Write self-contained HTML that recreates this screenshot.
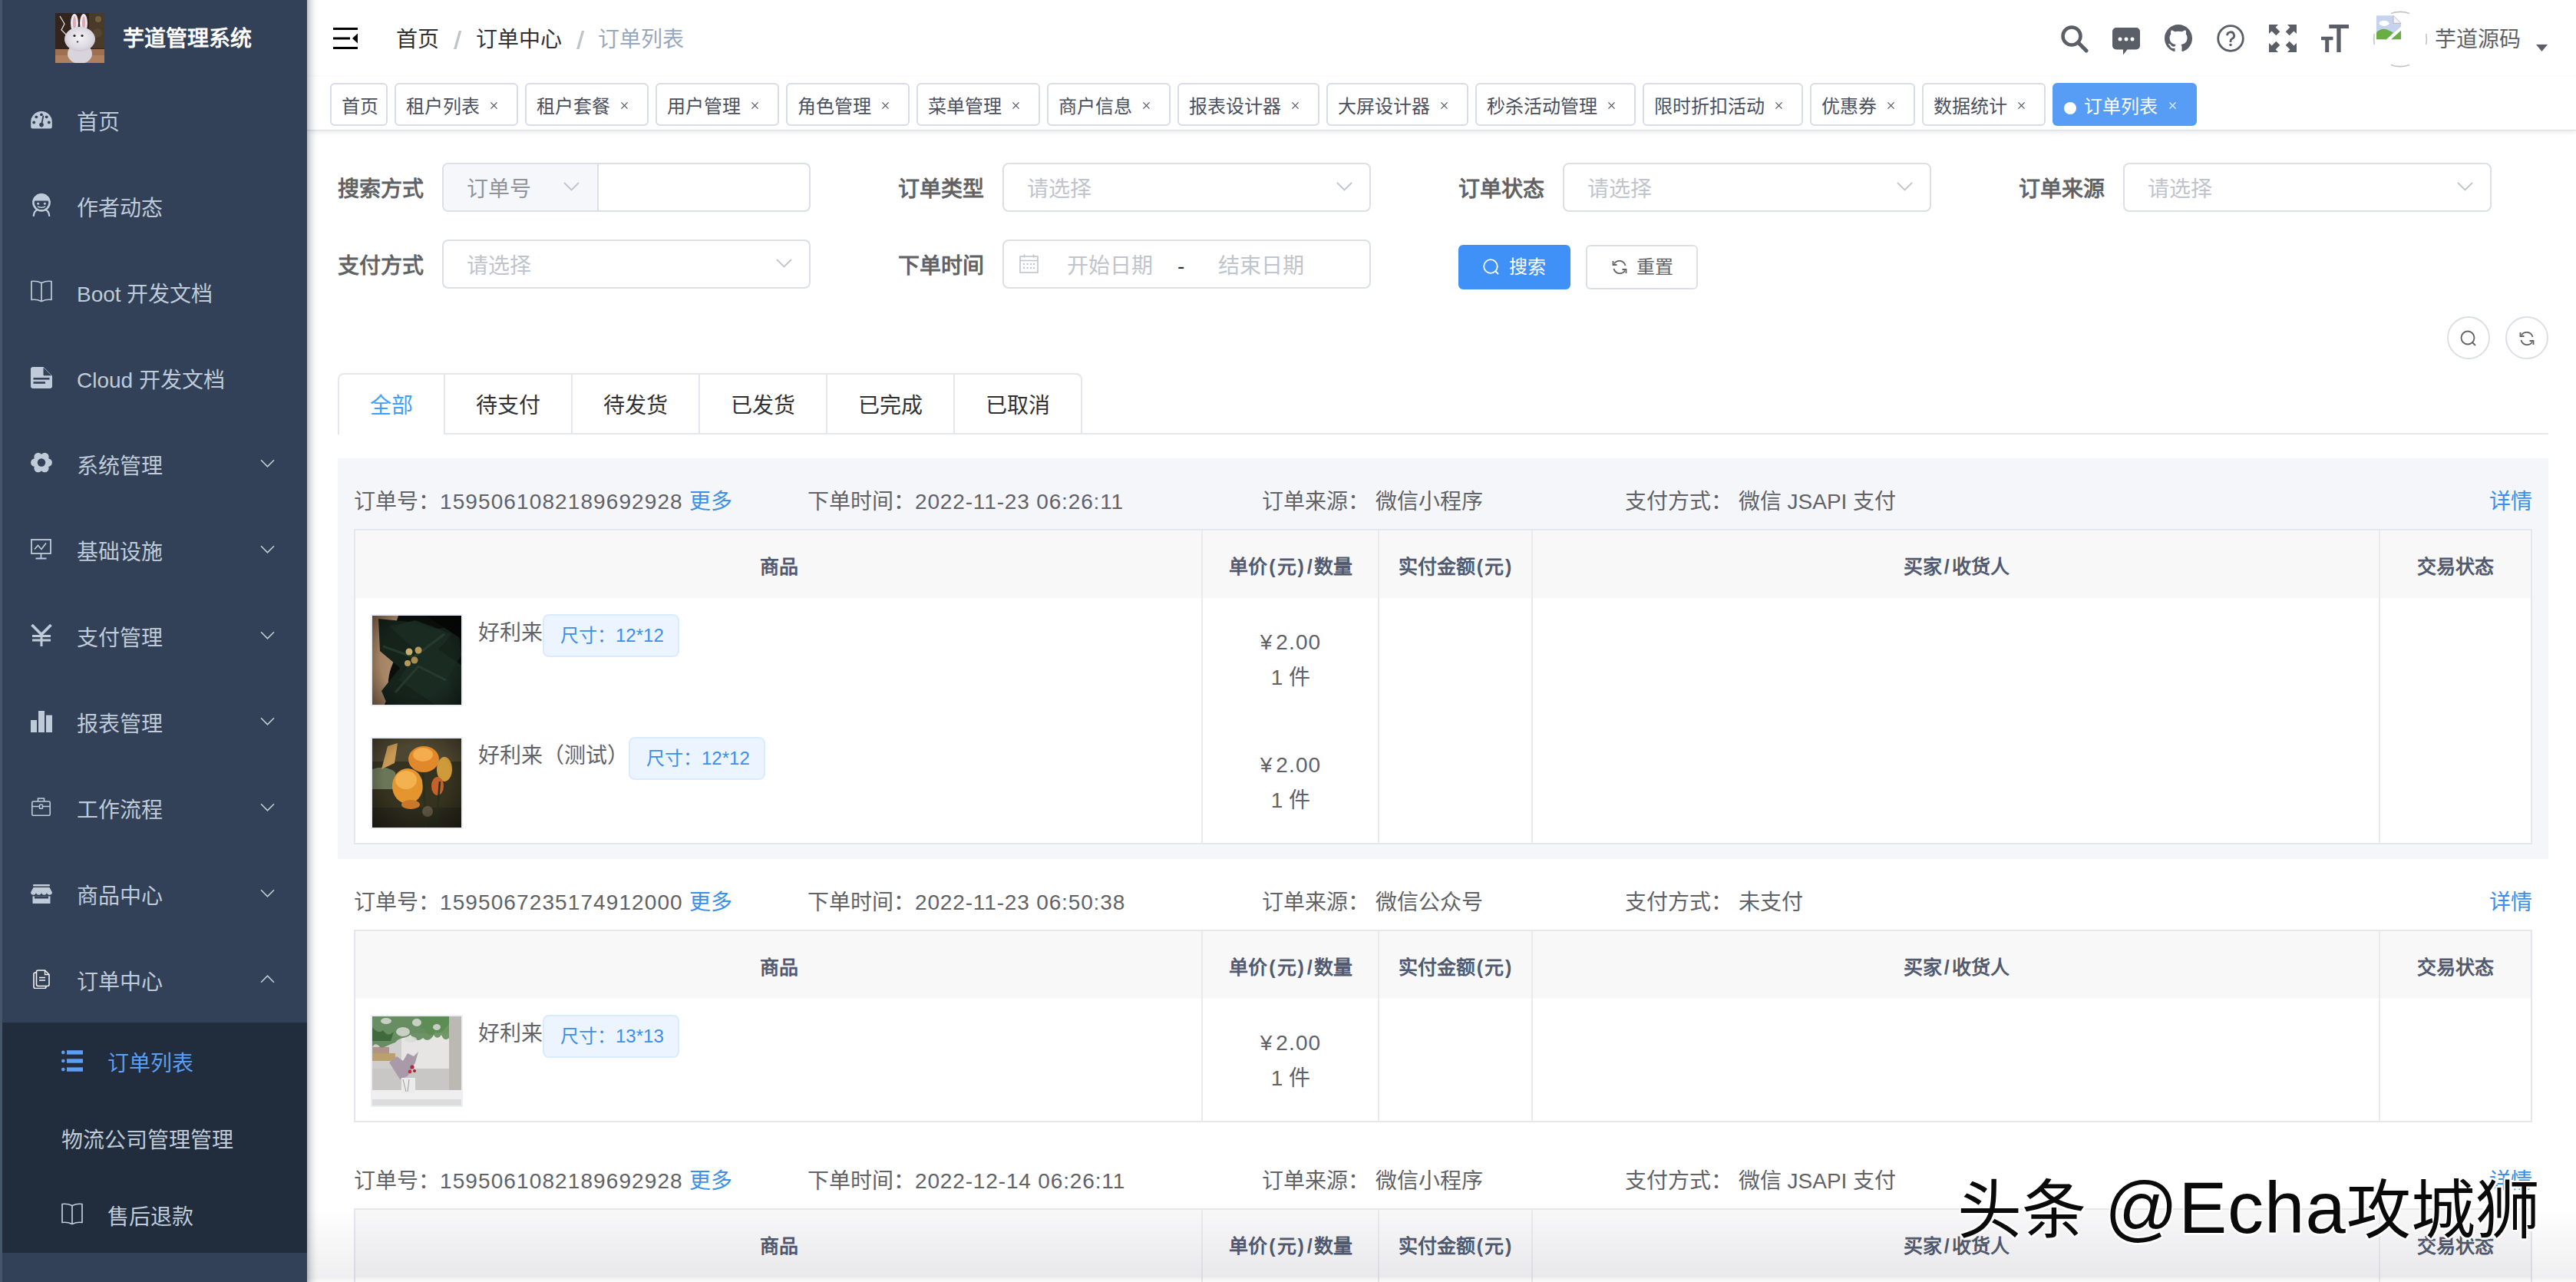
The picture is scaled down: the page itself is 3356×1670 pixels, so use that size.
<!DOCTYPE html>
<html lang="zh-CN"><head><meta charset="utf-8">
<style>
*{box-sizing:border-box;margin:0;padding:0}
html,body{width:3356px;height:1670px;overflow:hidden;background:#fff;font-family:"Liberation Sans",sans-serif;position:relative}
.abs{position:absolute}
/* sidebar */
#side{position:absolute;left:0;top:0;width:400px;height:1670px;background:#324157;z-index:3}
#side .edge{position:absolute;left:0;top:0;width:3px;height:1670px;background:#45566b;z-index:2}
#logo{position:absolute;left:72px;top:17px;width:64px;height:65px}
#title{position:absolute;left:160px;top:28px;font-size:28px;font-weight:bold;color:#fff;line-height:46px;white-space:nowrap}
.mi{position:absolute;left:0;width:400px;height:112px;color:#bfcbd9;font-size:28px}
.mi .ic{position:absolute;left:40px;top:42px;width:28px;height:28px}
.mi .tx{position:absolute;left:100px;top:0;line-height:116px;white-space:nowrap}
.mi .ar{position:absolute;left:339px;top:48px;width:19px;height:11px}
#sub{position:absolute;left:0;top:1332px;width:400px;height:300px;background:#212d3c}
.si{position:absolute;left:0;width:400px;height:100px;color:#bfcbd9;font-size:28px}
.si .ic{position:absolute;left:80px;top:36px;width:28px;height:28px}
.si .tx{position:absolute;left:140px;top:0;line-height:104px;white-space:nowrap}
#sideshadow{position:absolute;left:400px;top:0;width:14px;height:1670px;background:linear-gradient(90deg,rgba(0,21,41,.26),rgba(0,21,41,.10) 40%,rgba(0,21,41,.03) 75%,rgba(0,21,41,0));z-index:2}
/* navbar */
#nav{position:absolute;left:400px;top:0;width:2956px;height:100px;background:#fff}
.bc{position:absolute;top:0;line-height:104px;font-size:28px;color:#303133;white-space:nowrap}
.sep{position:absolute;top:0;line-height:100px;font-size:28px;color:#c0c4cc;font-weight:bold}
.hic{position:absolute;top:30px;width:40px;height:40px}
/* tags */
#tags{position:absolute;left:400px;top:100px;width:2956px;height:70px;background:#fff;border-bottom:1px solid #d8dce5;box-shadow:0 2px 6px rgba(0,21,41,.10)}
.tag{position:absolute;top:8px;height:56px;border:2px solid #d8dce5;border-radius:6px;color:#495060;font-size:24px;line-height:57px;padding-left:13px;white-space:nowrap;background:#fff}
.tag .x{position:absolute;right:25px;top:23px;width:9px;height:9px}
.tag.act{background:#589df5;border-color:#589df5;color:#fff}
.tag.act .dot{display:inline-block;width:16px;height:16px;border-radius:50%;background:#fff;margin-right:10px;vertical-align:-2px}
/* form */
.lbl{position:absolute;font-size:28px;font-weight:bold;color:#606266;line-height:69px;white-space:nowrap}
.inp{position:absolute;height:64px;border:2px solid #dcdfe6;border-radius:8px;background:#fff}
.ph{position:absolute;font-size:28px;color:#c0c4cc;line-height:65px;white-space:nowrap}
.chev{position:absolute;width:21px;height:12px}
.btn{position:absolute;height:58px;border-radius:6px;font-size:24px;line-height:54px;white-space:nowrap}
/* tabs */
#tabs{position:absolute;left:440px;top:486px;height:80px;border:2px solid #e4e7ed;border-bottom:none;border-radius:8px 8px 0 0;display:flex}
.tab{height:78px;line-height:82px;font-size:28px;color:#303133;padding:0 40px;border-left:2px solid #e4e7ed;white-space:nowrap}
.tab:first-child{border-left:none;color:#409eff}
#tabline{position:absolute;left:578px;top:564px;width:2742px;height:2px;background:#e4e7ed}
/* orders */
.ord{position:absolute;left:440px;width:2880px}
.oh{position:absolute;top:0;height:92px;font-size:28px;color:#606266;line-height:113px;white-space:nowrap}
.num{letter-spacing:1.1px}
.blue{color:#3b8fea}
.pp{margin:0 2px}
.num2{letter-spacing:.85px}
.tbl{position:absolute;left:21px;top:92px;width:2838px;border:2px solid #e4e7ed;background:#fff}
.th{position:absolute;top:0;height:88px;background:#f8f8f9;font-size:25px;font-weight:bold;color:#515a6e;line-height:94px;text-align:center}
.vl{position:absolute;top:0;width:2px;background:#e8eaec}
.pimg{position:absolute;width:120px;height:120px;border:2px solid #ebeef5}
.pn{position:absolute;font-size:28px;color:#606266;line-height:40px;white-space:nowrap}
.ptag{position:absolute;height:56px;border:2px solid #d9ecff;background:#ecf5ff;border-radius:8px;color:#3b8fea;font-size:24px;line-height:52px;padding:0 21px;white-space:nowrap}
.price{position:absolute;width:230px;text-align:center;font-size:28px;color:#606266;line-height:46px}
</style></head><body>

<div id="side">
  <div id="logo"><svg width="64" height="65" viewBox="0 0 64 65"><defs><radialGradient id="rh" cx="50%" cy="45%" r="60%"><stop offset="0" stop-color="#f4f2f6"/><stop offset=".7" stop-color="#dcd8e0"/><stop offset="1" stop-color="#c4bfc8"/></radialGradient></defs>
<rect width="64" height="65" fill="#33251d"/><rect x="44" y="0" width="20" height="46" fill="#4a3a2a"/><circle cx="56" cy="8" r="4" fill="#6f6140"/><circle cx="55" cy="26" r="6" fill="#554632"/><rect y="47" width="64" height="18" fill="#9c7050"/><rect y="55" width="64" height="10" fill="#ad8060"/>
<path d="M6 4l6 10-4 8 6 6" stroke="#e8e8e8" stroke-width="1.2" fill="none"/>
<ellipse cx="25" cy="13" rx="5" ry="12" fill="#ece8ee"/><ellipse cx="25" cy="13" rx="2" ry="9" fill="#d9a9b6"/><ellipse cx="37" cy="13" rx="5" ry="12" fill="#ece8ee"/><ellipse cx="37" cy="13" rx="2" ry="9" fill="#d9a9b6"/>
<ellipse cx="32" cy="53" rx="16" ry="13" fill="#d8d4dc"/><ellipse cx="32" cy="34" rx="20" ry="16" fill="url(#rh)"/><circle cx="25" cy="29.5" r="1.6" fill="#222"/><circle cx="35" cy="29.5" r="1.6" fill="#222"/><ellipse cx="29" cy="37.5" rx="1.3" ry="1.1" fill="#333"/></svg></div>
  <div id="title">芋道管理系统</div>
  <div class="mi" style="top:102px"><svg class="ic" style="top:43px;height:23px" viewBox="0 0 28 23"><path d="M2.5 22.6Q0.2 22.6 0.2 20.3V14A13.8 14 0 0 1 27.8 14V20.3Q27.8 22.6 25.5 22.6z" fill="#bfcbd9"/><circle cx="4.2" cy="14.5" r="1.9" fill="#324157"/><circle cx="7.3" cy="7.3" r="1.9" fill="#324157"/><circle cx="14.0" cy="4.3" r="1.9" fill="#324157"/><circle cx="20.7" cy="7.3" r="1.9" fill="#324157"/><circle cx="23.8" cy="14.5" r="1.9" fill="#324157"/><path d="M16.3 6.5L14.2 17" stroke="#324157" stroke-width="1.8" stroke-linecap="round"/><circle cx="14" cy="17.6" r="2.8" fill="#324157"/></svg><div class="tx">首页</div></div>
  <div class="mi" style="top:214px"><svg class="ic" style="top:38px;height:30px" viewBox="0 0 28 30"><circle cx="14" cy="11.8" r="10.6" fill="none" stroke="#bfcbd9" stroke-width="2.6"/><path d="M3.6 9.5A10.6 10.6 0 0 1 24.4 9.5z" fill="#bfcbd9"/><circle cx="9.6" cy="13.2" r="1.5" fill="#bfcbd9"/><circle cx="18.4" cy="13.2" r="1.5" fill="#bfcbd9"/><path d="M9.5 17.3q4.5 1.8 9 0" stroke="#bfcbd9" stroke-width="1.6" fill="none" stroke-linecap="round"/><path d="M8 21.5Q4.3 23.5 3.8 29M20 21.5Q23.7 23.5 24.2 29" stroke="#bfcbd9" stroke-width="2.3" fill="none" stroke-linecap="round"/></svg><div class="tx">作者动态</div></div>
  <div class="mi" style="top:326px"><svg class="ic" style="top:39px;height:29px" viewBox="0 0 28 29"><path d="M1 1.5Q7.5 0.5 14 3.5Q20.5 0.5 27 1.5V25.5Q20.5 24.5 14 27.5Q7.5 24.5 1 25.5z" fill="none" stroke="#bfcbd9" stroke-width="1.7" stroke-linejoin="round"/><path d="M14 3.5V27.5" stroke="#bfcbd9" stroke-width="1.7"/></svg><div class="tx">Boot 开发文档</div></div>
  <div class="mi" style="top:438px"><svg class="ic" style="top:40px;height:28px" viewBox="0 0 28 28"><path d="M3 0h13.5L28 11.5V25q0 3-3 3H3q-3 0-3-3V3q0-3 3-3z" fill="#bfcbd9"/><path d="M16.5 0.8V10.5q0 .8.8.8H27.2z" fill="#324157"/><rect x="3.5" y="14" width="21" height="2.6" fill="#324157"/><rect x="3.5" y="19.2" width="15.5" height="2.6" fill="#324157"/></svg><div class="tx">Cloud 开发文档</div></div>
  <div class="mi" style="top:550px"><svg class="ic" style="top:39px;height:27px" viewBox="0 0 28 27"><circle cx="14" cy="13.5" r="10.8" fill="#bfcbd9"/><circle cx="22.60" cy="13.50" r="5.3" fill="#bfcbd9"/><circle cx="18.30" cy="20.95" r="5.3" fill="#bfcbd9"/><circle cx="9.70" cy="20.95" r="5.3" fill="#bfcbd9"/><circle cx="5.40" cy="13.50" r="5.3" fill="#bfcbd9"/><circle cx="9.70" cy="6.05" r="5.3" fill="#bfcbd9"/><circle cx="18.30" cy="6.05" r="5.3" fill="#bfcbd9"/><circle cx="14" cy="13.5" r="5.2" fill="#324157"/></svg><div class="tx">系统管理</div><svg class="ar" viewBox="0 0 18 10"><path d="M1 1l8 8 8-8" fill="none" stroke="#bfcbd9" stroke-width="1.6"/></svg></div>
  <div class="mi" style="top:662px"><svg class="ic" style="top:40px;height:27px" viewBox="0 0 28 27"><rect x="1" y="1" width="25" height="18" fill="none" stroke="#bfcbd9" stroke-width="1.8"/><path d="M5 13.5l4.5-5 4.5 5 6-8" fill="none" stroke="#bfcbd9" stroke-width="1.7"/><path d="M13.5 19.5v6M6.5 25.5h14" stroke="#bfcbd9" stroke-width="1.8"/></svg><div class="tx">基础设施</div><svg class="ar" viewBox="0 0 18 10"><path d="M1 1l8 8 8-8" fill="none" stroke="#bfcbd9" stroke-width="1.6"/></svg></div>
  <div class="mi" style="top:774px"><svg class="ic" style="top:39px;height:29px" viewBox="0 0 28 29"><path d="M1.5 1L14 13.5 26.5 1" fill="none" stroke="#bfcbd9" stroke-width="3.6"/><path d="M14 13v16M2 15.5h24M2 21h24" fill="none" stroke="#bfcbd9" stroke-width="3"/></svg><div class="tx">支付管理</div><svg class="ar" viewBox="0 0 18 10"><path d="M1 1l8 8 8-8" fill="none" stroke="#bfcbd9" stroke-width="1.6"/></svg></div>
  <div class="mi" style="top:886px"><svg class="ic" style="top:40px;height:28px" viewBox="0 0 28 28"><rect x="0" y="12" width="8" height="16" fill="#bfcbd9"/><rect x="10" y="0" width="8" height="28" fill="#bfcbd9"/><rect x="20" y="5.6" width="8" height="22.4" fill="#bfcbd9"/></svg><div class="tx">报表管理</div><svg class="ar" viewBox="0 0 18 10"><path d="M1 1l8 8 8-8" fill="none" stroke="#bfcbd9" stroke-width="1.6"/></svg></div>
  <div class="mi" style="top:998px"><svg class="ic" style="top:41px;left:41px;width:25px;height:24px" viewBox="0 0 25 24"><rect x="0.8" y="5" width="23.4" height="18.2" rx="1.5" fill="none" stroke="#bfcbd9" stroke-width="1.6"/><path d="M8.5 5V1h8v4M0.8 11.5h23.4" fill="none" stroke="#bfcbd9" stroke-width="1.6"/><rect x="10.5" y="9.3" width="4" height="5" rx=".8" fill="#324157" stroke="#bfcbd9" stroke-width="1.5"/></svg><div class="tx">工作流程</div><svg class="ar" viewBox="0 0 18 10"><path d="M1 1l8 8 8-8" fill="none" stroke="#bfcbd9" stroke-width="1.6"/></svg></div>
  <div class="mi" style="top:1110px"><svg class="ic" style="top:42px;height:25px" viewBox="0 0 28 25"><rect x="3" y="0" width="22" height="2.6" rx="1" fill="#bfcbd9"/><path d="M3.5 4h21l3.5 6.5c0 2-1.6 3.3-3.5 3.3s-3.5-1.3-3.5-3.3c0 2-1.6 3.3-3.5 3.3s-3.5-1.3-3.5-3.3c0 2-1.6 3.3-3.5 3.3S7 12.5 7 10.5c0 2-1.6 3.3-3.5 3.3S0 12.5 0 10.5z" fill="#bfcbd9"/><path d="M2.5 15.5h23V25h-23z" fill="#bfcbd9"/><rect x="5" y="15.5" width="18" height="3" fill="#324157"/></svg><div class="tx">商品中心</div><svg class="ar" viewBox="0 0 18 10"><path d="M1 1l8 8 8-8" fill="none" stroke="#bfcbd9" stroke-width="1.6"/></svg></div>
  <div class="mi" style="top:1222px" style="color:#f4f4f5"><svg class="ic" style="top:41px;left:43px;width:22px;height:25px" viewBox="0 0 22 25"><path d="M6.5 1h9l5.5 5.5V19.5q0 2-2 2h-12.5q-2 0-2-2V3q0-2 2-2z" fill="none" stroke="#f4f4f5" stroke-width="1.6"/><path d="M15.5 1v5.5h5.5" fill="none" stroke="#f4f4f5" stroke-width="1.3"/><path d="M4.5 4H3Q1 4 1 6v16.5q0 2 2 2h12q2 0 2-2V21.5" fill="none" stroke="#f4f4f5" stroke-width="1.6"/><path d="M8 10.5h8M8 14h8" stroke="#f4f4f5" stroke-width="1.6"/></svg><div class="tx">订单中心</div><svg class="ar" viewBox="0 0 18 10"><path d="M1 9l8-8 8 8" fill="none" stroke="#bfcbd9" stroke-width="1.6"/></svg></div>
  <div id="sub">
    <div class="si" style="top:2px;color:#5a9ef5"><svg class="ic" style="top:34px" viewBox="0 0 28 28"><g fill="#5a9ef5"><circle cx="2.3" cy="2.9" r="2.3"/><circle cx="2.3" cy="14" r="2.3"/><circle cx="2.3" cy="25.1" r="2.3"/><rect x="7" y="0.2" width="21" height="5.4"/><rect x="7" y="11.3" width="21" height="5.4"/><rect x="7" y="22.4" width="21" height="5.4"/></g></svg><div class="tx">订单列表</div></div>
    <div class="si" style="top:102px"><div class="tx" style="left:80px">物流公司管理管理</div></div>
    <div class="si" style="top:202px"><svg class="ic" style="top:33px;height:29px" viewBox="0 0 28 29"><path d="M1 1.5Q7.5 0.5 14 3.5Q20.5 0.5 27 1.5V25.5Q20.5 24.5 14 27.5Q7.5 24.5 1 25.5z" fill="none" stroke="#bfcbd9" stroke-width="1.7" stroke-linejoin="round"/><path d="M14 3.5V27.5" stroke="#bfcbd9" stroke-width="1.7"/></svg><div class="tx">售后退款</div></div>
  </div>
  <div class="edge"></div>
</div>
<div id="sideshadow"></div>

<div id="nav">
  <svg class="abs" style="left:34px;top:36px" width="32" height="28" viewBox="0 0 32 28"><rect x="0" y="0" width="32" height="3" fill="#000"/><rect x="0" y="12.5" width="22" height="3" fill="#000"/><rect x="0" y="25" width="32" height="3" fill="#000"/><path d="M32 7.5v13l-7-6.5z" fill="#000"/></svg>
  <div class="bc" style="left:116px">首页</div>
  <svg class="abs" style="left:191px;top:40px" width="11" height="24" viewBox="0 0 11 24"><path d="M6.8 0H10.3L3.6 24H0.1z" fill="#c0c4cc"/></svg>
  <div class="bc" style="left:220px">订单中心</div>
  <svg class="abs" style="left:351px;top:40px" width="11" height="24" viewBox="0 0 11 24"><path d="M6.8 0H10.3L3.6 24H0.1z" fill="#c0c4cc"/></svg>
  <div class="bc" style="left:379px;color:#97a8be">订单列表</div>
  <!-- search -->
  <svg class="abs" style="left:2284px;top:32px" width="37" height="37" viewBox="0 0 37 37"><circle cx="15" cy="15" r="11.5" fill="none" stroke="#5a5e66" stroke-width="4.5"/><path d="M23.5 23.5L34 34" stroke="#5a5e66" stroke-width="5" stroke-linecap="round"/></svg>
  <!-- message -->
  <svg class="abs" style="left:2352px;top:36px" width="36" height="36" viewBox="0 0 36 36"><path d="M5 0h26a5 5 0 0 1 5 5v18.5a5 5 0 0 1-5 5H19.5L14 35.5V28.5H5a5 5 0 0 1-5-5V5a5 5 0 0 1 5-5z" fill="#5a5e66"/><circle cx="10" cy="15" r="2.5" fill="#fff"/><circle cx="18" cy="15" r="2.5" fill="#fff"/><circle cx="26" cy="15" r="2.5" fill="#fff"/></svg>
  <!-- github -->
  <svg class="abs" style="left:2420px;top:32px" width="36" height="36" viewBox="0 0 16 16"><path fill="#5a5e66" d="M8 0C3.58 0 0 3.58 0 8c0 3.54 2.29 6.53 5.47 7.59.4.07.55-.17.55-.38 0-.19-.01-.82-.01-1.49-2.01.37-2.53-.49-2.69-.94-.09-.23-.48-.94-.82-1.13-.28-.15-.68-.52-.01-.53.63-.01 1.08.58 1.23.82.72 1.21 1.87.87 2.33.66.07-.52.28-.87.51-1.07-1.78-.2-3.64-.89-3.64-3.95 0-.87.31-1.59.82-2.15-.08-.2-.36-1.02.08-2.12 0 0 .67-.21 2.2.82.64-.18 1.32-.27 2-.27.68 0 1.36.09 2 .27 1.53-1.04 2.2-.82 2.2-.82.44 1.1.16 1.92.08 2.12.51.56.82 1.27.82 2.15 0 3.07-1.87 3.75-3.65 3.95.29.25.54.73.54 1.48 0 1.07-.01 1.93-.01 2.2 0 .21.15.46.55.38A8.013 8.013 0 0016 8c0-4.42-3.58-8-8-8z"/></svg>
  <!-- help -->
  <svg class="abs" style="left:2488px;top:32px" width="36" height="36" viewBox="0 0 36 36"><circle cx="18" cy="18" r="16.3" fill="none" stroke="#5a5e66" stroke-width="2.8"/><path d="M13.6 14.3a4.5 4.5 0 1 1 6.3 4.1c-1.3.7-1.9 1.5-1.9 3v1.6" fill="none" stroke="#5a5e66" stroke-width="2.8"/><circle cx="18" cy="26.5" r="1.8" fill="#5a5e66"/></svg>
  <!-- fullscreen -->
  <svg class="abs" style="left:2556px;top:32px" width="36" height="36" viewBox="0 0 36 36"><path d="M0.0 0.0 L12.0 0.0 L8.6 3.6 L14.3 9.3 L9.3 14.3 L3.6 8.6 L0.0 12.0zM36.0 0.0 L24.0 0.0 L27.4 3.6 L21.7 9.3 L26.7 14.3 L32.4 8.6 L36.0 12.0zM0.0 36.0 L12.0 36.0 L8.6 32.4 L14.3 26.7 L9.3 21.7 L3.6 27.4 L0.0 24.0zM36.0 36.0 L24.0 36.0 L27.4 32.4 L21.7 26.7 L26.7 21.7 L32.4 27.4 L36.0 24.0z" fill="#5a5e66"/></svg>
  <!-- font size -->
  <svg class="abs" style="left:2624px;top:32px" width="36" height="36" viewBox="0 0 36 36"><path d="M10.3 0h25.7v5H25.6v31h-5.3V5H10.3z" fill="#5a5e66"/><path d="M0 15.7h15.5v4.6H10.2V36H5.2V20.3H0z" fill="#5a5e66"/></svg>
  <!-- avatar -->
  <svg class="abs" style="left:2690px;top:14px" width="74" height="74" viewBox="0 0 74 74"><g fill="none" stroke="#c4c4c4" stroke-width="1.6"><path d="M25 3.6A34 34 0 0 1 49 3.6"/><path d="M25 70.4A34 34 0 0 0 49 70.4"/><path d="M3.3 30A34 34 0 0 0 3.3 44"/><path d="M70.7 30A34 34 0 0 1 70.7 44"/></g>
  <g transform="translate(6,6.3)"><path d="M0 0h22l10 10v21H0z" fill="#c5d3ee"/><path d="M22 0v10h10z" fill="#f4f4f4" stroke="#b0b0b0" stroke-width=".8"/><ellipse cx="10" cy="10" rx="6.5" ry="3.6" fill="#fff"/><path d="M0 31V22Q6 16 13 18L22 22 14 31z" fill="#6aad45"/><path d="M19 31L32 19V31z" fill="#6aad45"/><path d="M13 31L32 14.5V19.5L19 31z" fill="#fff"/></g></svg>
  <div class="bc" style="left:2772px;color:#606266;line-height:103px">芋道源码</div>
  <svg class="abs" style="left:2904px;top:58px" width="15" height="10" viewBox="0 0 15 10"><path d="M0 0h15l-7.5 9z" fill="#5a5e66"/></svg>
</div>
<div id="tags">
  <div class="tag" style="left:30px;width:75px">首页</div>
  <div class="tag" style="left:114px;width:161px">租户列表<svg class="x" viewBox="0 0 10 10"><path d="M0.5 0.5l9 9M9.5 0.5l-9 9" stroke="currentColor" stroke-width="1.3"/></svg></div>
  <div class="tag" style="left:284px;width:161px">租户套餐<svg class="x" viewBox="0 0 10 10"><path d="M0.5 0.5l9 9M9.5 0.5l-9 9" stroke="currentColor" stroke-width="1.3"/></svg></div>
  <div class="tag" style="left:454px;width:161px">用户管理<svg class="x" viewBox="0 0 10 10"><path d="M0.5 0.5l9 9M9.5 0.5l-9 9" stroke="currentColor" stroke-width="1.3"/></svg></div>
  <div class="tag" style="left:624px;width:161px">角色管理<svg class="x" viewBox="0 0 10 10"><path d="M0.5 0.5l9 9M9.5 0.5l-9 9" stroke="currentColor" stroke-width="1.3"/></svg></div>
  <div class="tag" style="left:794px;width:161px">菜单管理<svg class="x" viewBox="0 0 10 10"><path d="M0.5 0.5l9 9M9.5 0.5l-9 9" stroke="currentColor" stroke-width="1.3"/></svg></div>
  <div class="tag" style="left:964px;width:161px">商户信息<svg class="x" viewBox="0 0 10 10"><path d="M0.5 0.5l9 9M9.5 0.5l-9 9" stroke="currentColor" stroke-width="1.3"/></svg></div>
  <div class="tag" style="left:1134px;width:185px">报表设计器<svg class="x" viewBox="0 0 10 10"><path d="M0.5 0.5l9 9M9.5 0.5l-9 9" stroke="currentColor" stroke-width="1.3"/></svg></div>
  <div class="tag" style="left:1328px;width:185px">大屏设计器<svg class="x" viewBox="0 0 10 10"><path d="M0.5 0.5l9 9M9.5 0.5l-9 9" stroke="currentColor" stroke-width="1.3"/></svg></div>
  <div class="tag" style="left:1522px;width:209px">秒杀活动管理<svg class="x" viewBox="0 0 10 10"><path d="M0.5 0.5l9 9M9.5 0.5l-9 9" stroke="currentColor" stroke-width="1.3"/></svg></div>
  <div class="tag" style="left:1740px;width:209px">限时折扣活动<svg class="x" viewBox="0 0 10 10"><path d="M0.5 0.5l9 9M9.5 0.5l-9 9" stroke="currentColor" stroke-width="1.3"/></svg></div>
  <div class="tag" style="left:1958px;width:137px">优惠券<svg class="x" viewBox="0 0 10 10"><path d="M0.5 0.5l9 9M9.5 0.5l-9 9" stroke="currentColor" stroke-width="1.3"/></svg></div>
  <div class="tag" style="left:2104px;width:161px">数据统计<svg class="x" viewBox="0 0 10 10"><path d="M0.5 0.5l9 9M9.5 0.5l-9 9" stroke="currentColor" stroke-width="1.3"/></svg></div>
  <div class="tag act" style="left:2274px;width:188px"><span class="dot"></span>订单列表<svg class="x" viewBox="0 0 10 10"><path d="M0.5 0.5l9 9M9.5 0.5l-9 9" stroke="currentColor" stroke-width="1.3"/></svg></div>
</div>

<div id="form">
  <div class="lbl" style="left:440px;top:212px;width:112px;text-align:right">搜索方式</div>
  <div class="inp" style="left:576px;top:212px;width:480px"></div>
  <div class="abs" style="left:578px;top:214px;width:202px;height:60px;background:#f5f7fa;border-right:2px solid #dcdfe6;border-radius:6px 0 0 6px"></div>
  <div class="ph" style="left:608px;top:214px;color:#909399">订单号</div>
  <svg class="chev" style="left:734px;top:237px" viewBox="0 0 21 12"><path d="M1 1l9.5 9.5L20 1" fill="none" stroke="#c0c4cc" stroke-width="1.8"/></svg>
  <div class="lbl" style="left:1170px;top:212px;width:112px;text-align:right">订单类型</div>
  <div class="inp" style="left:1306px;top:212px;width:480px"></div>
  <div class="ph" style="left:1338px;top:214px">请选择</div>
  <svg class="chev" style="left:1741px;top:237px" viewBox="0 0 21 12"><path d="M1 1l9.5 9.5L20 1" fill="none" stroke="#c0c4cc" stroke-width="1.8"/></svg>
  <div class="lbl" style="left:1900px;top:212px;width:112px;text-align:right">订单状态</div>
  <div class="inp" style="left:2036px;top:212px;width:480px"></div>
  <div class="ph" style="left:2068px;top:214px">请选择</div>
  <svg class="chev" style="left:2471px;top:237px" viewBox="0 0 21 12"><path d="M1 1l9.5 9.5L20 1" fill="none" stroke="#c0c4cc" stroke-width="1.8"/></svg>
  <div class="lbl" style="left:2630px;top:212px;width:112px;text-align:right">订单来源</div>
  <div class="inp" style="left:2766px;top:212px;width:480px"></div>
  <div class="ph" style="left:2798px;top:214px">请选择</div>
  <svg class="chev" style="left:3201px;top:237px" viewBox="0 0 21 12"><path d="M1 1l9.5 9.5L20 1" fill="none" stroke="#c0c4cc" stroke-width="1.8"/></svg>

  <div class="lbl" style="left:440px;top:312px;width:112px;text-align:right">支付方式</div>
  <div class="inp" style="left:576px;top:312px;width:480px"></div>
  <div class="ph" style="left:608px;top:314px">请选择</div>
  <svg class="chev" style="left:1011px;top:337px" viewBox="0 0 21 12"><path d="M1 1l9.5 9.5L20 1" fill="none" stroke="#c0c4cc" stroke-width="1.8"/></svg>
  <div class="lbl" style="left:1170px;top:312px;width:112px;text-align:right">下单时间</div>
  <div class="inp" style="left:1306px;top:312px;width:480px"></div>
  <svg class="abs" style="left:1328px;top:331px" width="25" height="25" viewBox="0 0 25 25"><rect x="1" y="3" width="23" height="21" fill="none" stroke="#c0c4cc" stroke-width="1.6"/><path d="M1 8.5h23M6.5 0.5v4M18.5 0.5v4" stroke="#c0c4cc" stroke-width="1.6"/><g fill="#c0c4cc"><rect x="5" y="12" width="2" height="2"/><rect x="9.5" y="12" width="2" height="2"/><rect x="14" y="12" width="2" height="2"/><rect x="18" y="12" width="2" height="2"/><rect x="5" y="17" width="2" height="2"/><rect x="9.5" y="17" width="2" height="2"/><rect x="14" y="17" width="2" height="2"/><rect x="18" y="17" width="2" height="2"/></g></svg>
  <div class="ph" style="left:1390px;top:314px">开始日期</div>
  <div class="ph" style="left:1534px;top:314px;color:#303133">-</div>
  <div class="ph" style="left:1587px;top:314px">结束日期</div>

  <div class="btn" style="left:1900px;top:319px;width:146px;background:#4091f7;color:#fff;border:2px solid #4091f7"></div>
  <svg class="abs" style="left:1932px;top:337px" width="22" height="21" viewBox="0 0 22 21"><circle cx="10" cy="10" r="8.8" fill="none" stroke="#fff" stroke-width="1.8"/><path d="M16.5 16.5l3.5 3.5" stroke="#fff" stroke-width="1.8"/></svg>
  <div class="abs" style="left:1966px;top:319px;line-height:58px;font-size:24px;color:#fff">搜索</div>
  <div class="btn" style="left:2066px;top:319px;width:146px;background:#fff;border:2px solid #dcdfe6"></div>
  <svg class="abs" style="left:2100px;top:338px" width="20" height="20" viewBox="0 0 20 20"><path d="M17.5 8A8 8 0 0 0 3 5.5M2.5 12A8 8 0 0 0 17 14.5" fill="none" stroke="#606266" stroke-width="1.8"/><path d="M1.5 2v5h5M18.5 18v-5h-5" fill="none" stroke="#606266" stroke-width="1.8"/></svg>
  <div class="abs" style="left:2132px;top:319px;line-height:58px;font-size:24px;color:#606266">重置</div>

  <div class="abs" style="left:3188px;top:412px;width:56px;height:56px;border-radius:50%;border:2px solid #dcdfe6"></div>
  <svg class="abs" style="left:3205px;top:430px" width="22" height="22" viewBox="0 0 22 22"><circle cx="10" cy="10" r="8.5" fill="none" stroke="#606266" stroke-width="1.8"/><path d="M16 16l4 4" stroke="#606266" stroke-width="1.8"/></svg>
  <div class="abs" style="left:3264px;top:412px;width:56px;height:56px;border-radius:50%;border:2px solid #dcdfe6"></div>
  <svg class="abs" style="left:3282px;top:431px" width="20" height="20" viewBox="0 0 20 20"><path d="M17.5 8A8 8 0 0 0 3 5.5M2.5 12A8 8 0 0 0 17 14.5" fill="none" stroke="#606266" stroke-width="1.8"/><path d="M1.5 2v5h5M18.5 18v-5h-5" fill="none" stroke="#606266" stroke-width="1.8"/></svg>

  <div id="tabs"><div class="tab">全部</div><div class="tab">待支付</div><div class="tab">待发货</div><div class="tab">已发货</div><div class="tab">已完成</div><div class="tab">已取消</div></div>
  <div id="tabline"></div>
</div>
<div class="ord" style="top:597px;height:522px;background:#f5f6fa">
  <div class="oh" style="left:21px">订单号：<span class="num">1595061082189692928</span> <span class="blue">更多</span></div>
  <div class="oh" style="left:612px">下单时间：<span class="num2">2022-11-23 06:26:11</span></div>
  <div class="oh" style="left:1204px">订单来源： 微信小程序</div>
  <div class="oh" style="left:1677px">支付方式： 微信 JSAPI 支付</div>
  <div class="oh blue" style="left:2803px">详情</div>
  <div class="tbl" style="height:411px">
    <div class="th" style="left:0.0px;width:1103.5px">商品</div>
    <div class="th" style="left:1103.5px;width:230.0px">单价<span class="pp">(</span>元<span class="pp">)</span><span class="pp">/</span>数量</div>
    <div class="th" style="left:1333.5px;width:200.2px">实付金额<span class="pp">(</span>元<span class="pp">)</span></div>
    <div class="th" style="left:1533.7px;width:1104.0px">买家<span class="pp" style="margin:0 3px">/</span>收货人</div>
    <div class="th" style="left:2637.7px;width:196.3px">交易状态</div>
    <div class="vl" style="left:1101.5px;height:407px"></div>
    <div class="vl" style="left:1331.5px;height:407px"></div>
    <div class="vl" style="left:1531.7px;height:407px"></div>
    <div class="vl" style="left:2635.7px;height:407px"></div>
    <div class="pimg" style="left:20px;top:109px"><svg width="116" height="116" viewBox="0 0 116 116" style="display:block"><defs><radialGradient id="v1" cx="50%" cy="50%" r="75%"><stop offset=".55" stop-color="#000" stop-opacity="0"/><stop offset="1" stop-color="#000" stop-opacity=".5"/></radialGradient><linearGradient id="g1" x1="0" x2="1"><stop offset="0" stop-color="#9c7b5c"/><stop offset="1" stop-color="#b39272"/></linearGradient></defs>
<rect width="116" height="116" fill="#0a0f0c"/><path d="M0 0h34c-6 18-10 36-2 52-8 14-14 30-10 50l-6 14H0z" fill="url(#g1)"/>
<path d="M8 4l40 4 34 10 30-6 4 40-18 28 18 46H24l-12-28 24-30-26-22z" fill="#15231b"/><path d="M22 14l36 32-24 38 48 32h34V64L86 44 104 24 56 6z" fill="#1b2d23" opacity=".85"/><path d="M30 100l30-34 36 18M14 40l40 14 40-30" stroke="#2b4335" stroke-width="3" fill="none" opacity=".7"/><path d="M70 0l46 30V0z" fill="#060807"/>
<circle cx="48" cy="47" r="4.5" fill="#c7ae6e"/><circle cx="60" cy="45" r="4.5" fill="#b89b5c"/><circle cx="55" cy="58" r="4.5" fill="#a88c50"/><circle cx="46" cy="62" r="4" fill="#b4995a"/><rect width="116" height="116" fill="url(#v1)"/></svg></div>
    <div class="pn" style="left:160px;top:114px">好利来</div>
    <div class="ptag" style="left:244px;top:109px;width:178px">尺寸：12*12</div>
    <div class="price" style="left:1103.5px;top:123px"><span style="margin-right:5px">¥</span><span class="num">2.00</span><br>1 件</div>
    <div class="pimg" style="left:20px;top:269px"><svg width="116" height="116" viewBox="0 0 116 116" style="display:block"><defs><radialGradient id="v2" cx="50%" cy="45%" r="75%"><stop offset=".5" stop-color="#000" stop-opacity="0"/><stop offset="1" stop-color="#000" stop-opacity=".45"/></radialGradient></defs>
<rect width="116" height="116" fill="#35321f"/><rect width="116" height="30" fill="#4d4630"/><path d="M0 40q18-6 30 4l4 22H0z" fill="#6b7558"/><path d="M0 90h116v26H0z" fill="#2c2a1c"/>
<path d="M12 40l8-30 13-4-4 26z" fill="#c99a55"/><ellipse cx="67" cy="27" rx="20" ry="17" fill="#e0882a"/><ellipse cx="66" cy="21" rx="13" ry="9" fill="#f4ad4c"/><ellipse cx="46" cy="62" rx="20" ry="23" fill="#e4952e"/><ellipse cx="44" cy="54" rx="14" ry="12" fill="#f3b150"/><ellipse cx="94" cy="40" rx="10" ry="16" fill="#cf9a3a"/><ellipse cx="85" cy="62" rx="8" ry="12" fill="#c4622a"/><ellipse cx="50" cy="86" rx="12" ry="6" fill="#c9782a"/>
<path d="M66 45l4 71M88 56l-5 60" stroke="#26301c" stroke-width="2.5"/><circle cx="72" cy="95" r="7" fill="#8a7a66" opacity=".5"/><rect width="116" height="116" fill="url(#v2)"/></svg></div>
    <div class="pn" style="left:160px;top:274px">好利来（测试）</div>
    <div class="ptag" style="left:356px;top:269px;width:178px">尺寸：12*12</div>
    <div class="price" style="left:1103.5px;top:283px"><span style="margin-right:5px">¥</span><span class="num">2.00</span><br>1 件</div>
  </div>
</div>
<div class="ord" style="top:1119px;height:363px;background:#fff">
  <div class="oh" style="left:21px">订单号：<span class="num">1595067235174912000</span> <span class="blue">更多</span></div>
  <div class="oh" style="left:612px">下单时间：<span class="num2">2022-11-23 06:50:38</span></div>
  <div class="oh" style="left:1204px">订单来源： 微信公众号</div>
  <div class="oh" style="left:1677px">支付方式： 未支付</div>
  <div class="oh blue" style="left:2803px">详情</div>
  <div class="tbl" style="height:251px">
    <div class="th" style="left:0.0px;width:1103.5px">商品</div>
    <div class="th" style="left:1103.5px;width:230.0px">单价<span class="pp">(</span>元<span class="pp">)</span><span class="pp">/</span>数量</div>
    <div class="th" style="left:1333.5px;width:200.2px">实付金额<span class="pp">(</span>元<span class="pp">)</span></div>
    <div class="th" style="left:1533.7px;width:1104.0px">买家<span class="pp" style="margin:0 3px">/</span>收货人</div>
    <div class="th" style="left:2637.7px;width:196.3px">交易状态</div>
    <div class="vl" style="left:1101.5px;height:247px"></div>
    <div class="vl" style="left:1331.5px;height:247px"></div>
    <div class="vl" style="left:1531.7px;height:247px"></div>
    <div class="vl" style="left:2635.7px;height:247px"></div>
    <div class="pimg" style="left:20px;top:109px"><svg width="116" height="116" viewBox="0 0 116 116" style="display:block"><rect width="116" height="116" fill="#cfcecd"/><rect x="38" y="22" width="62" height="70" fill="#e6e5e4"/><rect x="100" y="0" width="16" height="116" fill="#bcb8b4"/><rect y="68" width="100" height="30" fill="#c8c7c6"/>
<path d="M0 0h100v10c-6 8-12 14-18 10-4 10-10 14-16 8-6 6-12 2-16-4-8 6-14 2-20 10-8 2-14 8-20 6-4-6-8-4-10 0z" fill="#4f7d48" opacity=".8"/><path d="M60 0h40v28c-4 4-8 2-10-4-4 6-8 4-10 0-6 2-10-2-12-8-4 2-6-4-8-8z" fill="#5d8c52" opacity=".85"/><path d="M0 14q8 10 14 4 6 10 14 2l-4 12H0z" fill="#3f6b3c"/><g fill="#d9dcd6" opacity=".85"><ellipse cx="40" cy="20" rx="9" ry="6"/><ellipse cx="58" cy="8" rx="6" ry="5"/><ellipse cx="18" cy="6" rx="7" ry="4"/><ellipse cx="84" cy="14" rx="5" ry="4"/><ellipse cx="50" cy="30" rx="8" ry="4"/></g>
<rect x="0" y="48" width="30" height="10" fill="#b9a06c"/><rect x="0" y="40" width="22" height="8" fill="#9a6a5a" opacity=".6"/>
<rect y="96" width="116" height="20" fill="#efefef"/><rect y="108" width="116" height="8" fill="#dcdcdc"/>
<path d="M22 60l10-8 8 6 6-10 8 4 6-6-4 14-10 18-10 4z" fill="#a99aaa"/><circle cx="52" cy="66" r="2.6" fill="#b02838"/><circle cx="49" cy="72" r="2.4" fill="#c03040"/><circle cx="55" cy="71" r="2" fill="#a82030"/><rect x="38" y="80" width="18" height="20" fill="#ecebec"/><path d="M40 82l4 16M48 82l-2 16" stroke="#9b9aa0" stroke-width="1"/></svg></div>
    <div class="pn" style="left:160px;top:114px">好利来</div>
    <div class="ptag" style="left:244px;top:109px;width:178px">尺寸：13*13</div>
    <div class="price" style="left:1103.5px;top:123px"><span style="margin-right:5px">¥</span><span class="num">2.00</span><br>1 件</div>
  </div>
</div>
<div class="ord" style="top:1482px;height:300px;background:#fff">
  <div class="oh" style="left:21px">订单号：<span class="num">1595061082189692928</span> <span class="blue">更多</span></div>
  <div class="oh" style="left:612px">下单时间：<span class="num2">2022-12-14 06:26:11</span></div>
  <div class="oh" style="left:1204px">订单来源： 微信小程序</div>
  <div class="oh" style="left:1677px">支付方式： 微信 JSAPI 支付</div>
  <div class="oh blue" style="left:2803px">详情</div>
  <div class="tbl" style="height:251px">
    <div class="th" style="left:0.0px;width:1103.5px">商品</div>
    <div class="th" style="left:1103.5px;width:230.0px">单价<span class="pp">(</span>元<span class="pp">)</span><span class="pp">/</span>数量</div>
    <div class="th" style="left:1333.5px;width:200.2px">实付金额<span class="pp">(</span>元<span class="pp">)</span></div>
    <div class="th" style="left:1533.7px;width:1104.0px">买家<span class="pp" style="margin:0 3px">/</span>收货人</div>
    <div class="th" style="left:2637.7px;width:196.3px">交易状态</div>
    <div class="vl" style="left:1101.5px;height:247px"></div>
    <div class="vl" style="left:1331.5px;height:247px"></div>
    <div class="vl" style="left:1531.7px;height:247px"></div>
    <div class="vl" style="left:2635.7px;height:247px"></div>
    <div class="pimg" style="left:20px;top:109px"><svg width="116" height="116" viewBox="0 0 116 116" style="display:block"><defs><radialGradient id="v1" cx="50%" cy="50%" r="75%"><stop offset=".55" stop-color="#000" stop-opacity="0"/><stop offset="1" stop-color="#000" stop-opacity=".5"/></radialGradient><linearGradient id="g1" x1="0" x2="1"><stop offset="0" stop-color="#9c7b5c"/><stop offset="1" stop-color="#b39272"/></linearGradient></defs>
<rect width="116" height="116" fill="#0a0f0c"/><path d="M0 0h34c-6 18-10 36-2 52-8 14-14 30-10 50l-6 14H0z" fill="url(#g1)"/>
<path d="M8 4l40 4 34 10 30-6 4 40-18 28 18 46H24l-12-28 24-30-26-22z" fill="#15231b"/><path d="M22 14l36 32-24 38 48 32h34V64L86 44 104 24 56 6z" fill="#1b2d23" opacity=".85"/><path d="M30 100l30-34 36 18M14 40l40 14 40-30" stroke="#2b4335" stroke-width="3" fill="none" opacity=".7"/><path d="M70 0l46 30V0z" fill="#060807"/>
<circle cx="48" cy="47" r="4.5" fill="#c7ae6e"/><circle cx="60" cy="45" r="4.5" fill="#b89b5c"/><circle cx="55" cy="58" r="4.5" fill="#a88c50"/><circle cx="46" cy="62" r="4" fill="#b4995a"/><rect width="116" height="116" fill="url(#v1)"/></svg></div>
    <div class="pn" style="left:160px;top:114px">好利来</div>
    <div class="ptag" style="left:244px;top:109px;width:178px">尺寸：12*12</div>
    <div class="price" style="left:1103.5px;top:123px"><span style="margin-right:5px">¥</span><span class="num">2.00</span><br>1 件</div>
  </div>
</div>
<div id="shade" class="abs" style="left:400px;top:1572px;width:2956px;height:98px;background:linear-gradient(180deg,rgba(40,40,60,0) 0,rgba(40,40,60,.03) 40%,rgba(40,40,60,.075) 95%,rgba(40,40,60,.02) 100%);z-index:4"></div>
<div id="wm" class="abs" style="left:2550px;top:1509px;height:110px;white-space:nowrap;color:#0a0a0a;z-index:5;text-shadow:-2px -2px 0 #fff,2px -2px 0 #fff,-2px 2px 0 #fff,2px 2px 0 #fff,0 3px 0 #fff"><span style="font-size:84px">头条</span><span style="font-size:94px;margin-left:24px;letter-spacing:1px">@Echa</span><span style="font-size:84px">攻城狮</span></div>
</body></html>
